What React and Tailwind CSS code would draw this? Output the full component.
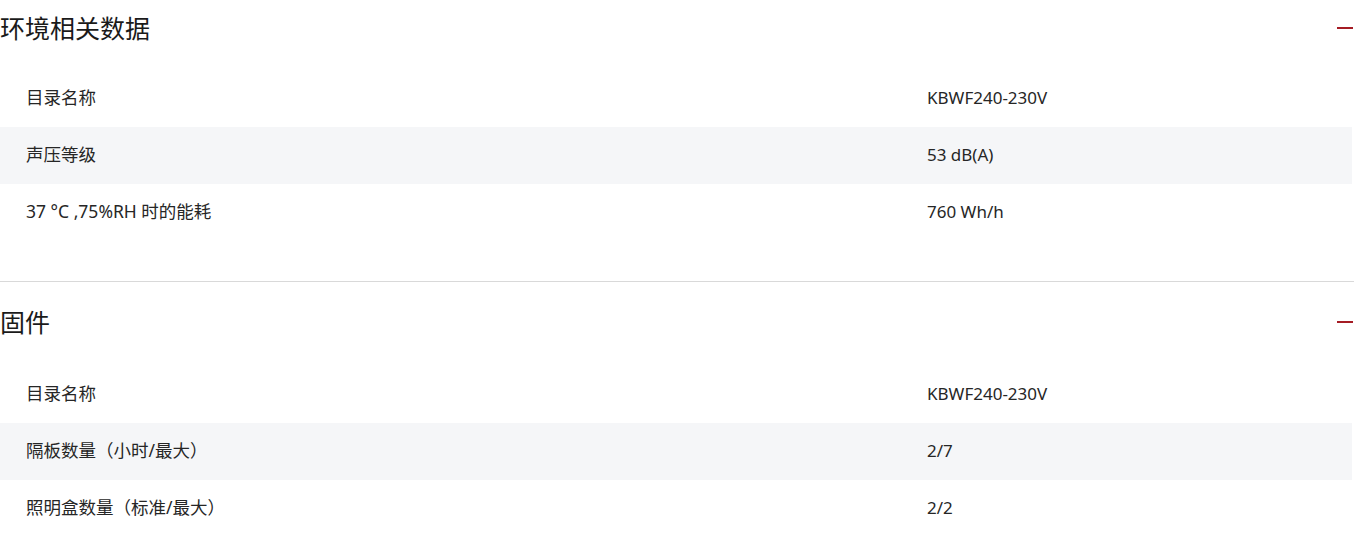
import React from "react";

const sections = [
  {
    title: "环境相关数据",
    rows: [
      { label: "目录名称", value: "KBWF240-230V" },
      { label: "声压等级", value: "53 dB(A)" },
      { label: "37 °C ,75%RH 时的能耗", value: "760 Wh/h" },
    ],
  },
  {
    title: "固件",
    rows: [
      { label: "目录名称", value: "KBWF240-230V" },
      { label: "隔板数量（小时/最大）", value: "2/7" },
      { label: "照明盒数量（标准/最大）", value: "2/2" },
    ],
  },
];

function Section({ title, rows, first }) {
  return (
    <section className={first ? "pb-[40px]" : "border-t border-[#d9d9d9] pt-[12px]"}>
      {/* header with collapse toggle */}
      <div className="flex h-14 items-center justify-between">
        <h2 className="text-[25px] leading-none text-[#1a1a1a]">{title}</h2>
        <span className="mr-[1px] h-[2px] w-[16px] bg-[#a51c24]" />
      </div>
      <div className={`pr-[2px] ${first ? "mt-[14px]" : "mt-[16px]"}`}>
        {rows.map((row, i) => (
          <div
            key={row.label}
            className={`flex h-[57px] items-center pb-[2px] ${i % 2 === 1 ? "bg-[#f5f6f8]" : ""}`}
          >
            <div className="w-[927px] pl-[26px] text-[17.5px] text-[#262626]">{row.label}</div>
            <div className="text-[17px] text-[#262626]">{row.value}</div>
          </div>
        ))}
      </div>
    </section>
  );
}

export default function App() {
  return (
    <div
      className="min-h-screen bg-white"
      style={{ fontFamily: '"Noto Sans", "Noto Sans CJK SC", sans-serif' }}
    >
      {sections.map((s, i) => (
        <Section key={s.title} {...s} first={i === 0} />
      ))}
    </div>
  );
}
